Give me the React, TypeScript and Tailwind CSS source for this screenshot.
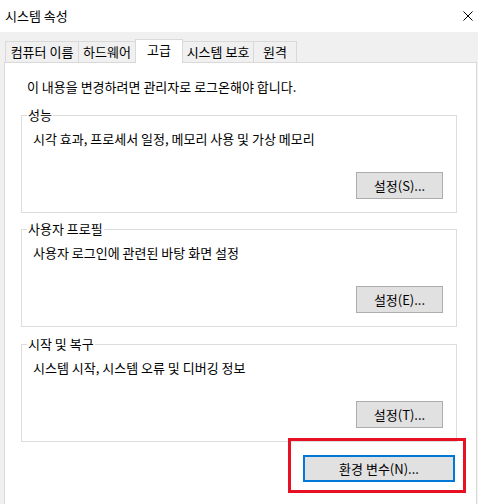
import type { ReactNode } from 'react';

const tabs = [
  { label: '컴퓨터 이름', width: 'w-[74px]', selected: false },
  { label: '하드웨어', width: 'w-[58px]', selected: false },
  { label: '고급', width: 'w-[48px]', selected: true },
  { label: '시스템 보호', width: 'w-[72px]', selected: false },
  { label: '원격', width: 'w-[44px]', selected: false },
];

function DialogButton({ children, width }: { children: ReactNode; width: string }) {
  return (
    <button
      type="button"
      className={`${width} h-[27px] border border-[#adadad] bg-[#e1e1e1] text-[13px] leading-none text-black`}
    >
      {children}
    </button>
  );
}

interface GroupProps {
  title: string;
  description: string;
  button: string;
  className?: string;
}

function GroupBox({ title, description, button, className = '' }: GroupProps) {
  return (
    <fieldset className={`ml-[16px] w-[436px] border border-[#dcdcdc] pb-[13px] ${className}`}>
      <legend className="ml-[5px] px-[1px] text-[13px] leading-[14px]">{title}</legend>
      <p className="mt-[9px] pl-[11px] text-[13px] leading-[16px]">{description}</p>
      <div className="mt-[25px] flex justify-end pr-[13px]">
        <DialogButton width="w-[87px]">{button}</DialogButton>
      </div>
    </fieldset>
  );
}

export default function App() {
  return (
    <div className="h-[504px] w-[478px] overflow-hidden bg-[#f0f0f0] font-['Noto_Sans_CJK_KR',sans-serif] text-black">
      {/* title bar */}
      <div className="flex h-[32px] items-center justify-between bg-white pl-[5px] pr-[5px]">
        <span className="text-[13px] leading-[16px]">시스템 속성</span>
        <svg width="10" height="10" viewBox="0 0 10 10" className="mb-[1px]">
          <path d="M0.5 0.5 L9.5 9.5 M9.5 0.5 L0.5 9.5" stroke="#000" strokeWidth="1" fill="none" />
        </svg>
      </div>

      {/* tabs */}
      <div className="flex items-end pl-[5px] pt-[7px]">
        {tabs.map((tab, i) =>
          tab.selected ? (
            <div
              key={tab.label}
              className={`${tab.width} relative z-10 -mb-px -ml-px flex h-[24px] items-center justify-center border-x border-t border-[#d9d9d9] bg-white pb-[3px] text-[13px] leading-[16px]`}
            >
              {tab.label}
            </div>
          ) : (
            <div
              key={tab.label}
              className={`${tab.width} ${i === 0 ? '' : '-ml-px'} flex h-[21px] items-center justify-center border-x border-t border-[#d9d9d9] bg-[#f0f0f0] text-[13px] leading-[16px]`}
            >
              {tab.label}
            </div>
          )
        )}
      </div>

      {/* tab page */}
      <div className="ml-[4px] h-[460px] w-[473px] border border-[#d9d9d9] bg-white pt-[16px]">
        <p className="pl-[22px] text-[13px] leading-[16px]">
          이 내용을 변경하려면 관리자로 로그온해야 합니다.
        </p>

        <GroupBox
          className="mt-[13px]"
          title="성능"
          description="시각 효과, 프로세서 일정, 메모리 사용 및 가상 메모리"
          button="설정(S)..."
        />
        <GroupBox
          className="mt-[9px]"
          title="사용자 프로필"
          description="사용자 로그인에 관련된 바탕 화면 설정"
          button="설정(E)..."
        />
        <GroupBox
          className="mt-[10px]"
          title="시작 및 복구"
          description="시스템 시작, 시스템 오류 및 디버깅 정보"
          button="설정(T)..."
        />

        <div className="ml-[16px] mt-[13px] flex w-[436px] justify-end pr-[2px]">
          <div className="relative">
            <button
              type="button"
              className="h-[27px] w-[152px] border border-[#0078d7] bg-[#e1e1e1] text-[13px] leading-none text-black shadow-[inset_0_0_0_1px_#0078d7]"
            >
              환경 변수(N)...
            </button>
            {/* red highlight annotation */}
            <div className="pointer-events-none absolute left-[-15px] top-[-17px] z-10 h-[55px] w-[178px] border-[3px] border-[#e81123]" />
          </div>
        </div>
      </div>
    </div>
  );
}
